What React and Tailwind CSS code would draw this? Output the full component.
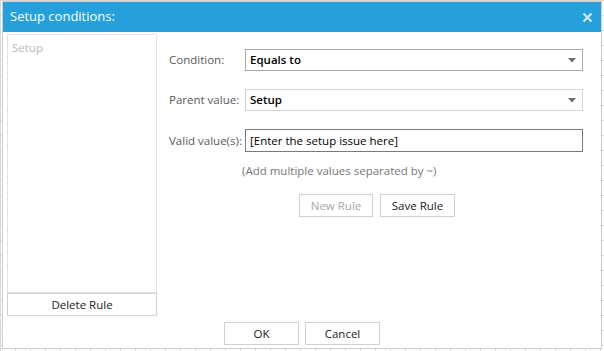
import { useState } from 'react';

function Select({ value, focused }) {
  return (
    <div
      className={`flex h-[22px] flex-1 items-center justify-between border bg-white pl-[4px] pr-[6px] ${
        focused ? 'border-[#a9a9a9]' : 'border-[#d4d4d4]'
      }`}
    >
      <span className="text-[11.5px] font-semibold text-black">{value}</span>
      <svg width="8" height="5" viewBox="0 0 8 5">
        <path d="M0 0 H8 L4 4.5 Z" fill="#6e6e6e" />
      </svg>
    </div>
  );
}

function Btn({ children, disabled, className = '' }) {
  return (
    <button
      type="button"
      disabled={disabled}
      className={`h-[23px] border border-[#d0d0d0] bg-white text-[11.5px] ${
        disabled ? 'text-[#a8a8a8]' : 'text-[#1a1a1a]'
      } ${className}`}
    >
      {children}
    </button>
  );
}

export default function App() {
  const [valid, setValid] = useState('[Enter the setup issue here]');

  return (
    <div
      className="h-[351px] w-[604px] overflow-hidden bg-white bg-[linear-gradient(to_right,#d8d8d8_1px,transparent_1px),linear-gradient(to_bottom,#d8d8d8_1px,transparent_1px)] bg-[size:15px_15px] pt-[1px] pl-[2px]"
      style={{ fontFamily: '"Open Sans", "Noto Sans", sans-serif' }}
    >
      <div className="flex h-[348px] w-[600px] flex-col border border-[#cfcfcf] bg-white">
        {/* Title bar */}
        <div className="flex h-[30px] shrink-0 items-center justify-between bg-[#26a0da] pl-[7px] pr-[8px]">
          <span className="text-[13px] text-white">Setup conditions:</span>
          <svg width="11" height="11" viewBox="0 0 11 11">
            <path d="M1.5 1.5 L9.5 9.5 M9.5 1.5 L1.5 9.5" stroke="#cfeaf8" strokeWidth="2.2" />
          </svg>
        </div>

        {/* Body */}
        <div className="flex flex-1 pt-[2px] pl-[4px] pr-[18px]">
          <div className="flex w-[150px] flex-col">
            <div className="flex-1 border border-[#e4e4e4] px-[4px] pt-[3px] leading-[16px]">
              <span className="text-[11.5px] text-[#b8b8b8]">Setup</span>
            </div>
            <Btn className="w-full">Delete Rule</Btn>
          </div>

          <div className="flex flex-1 flex-col pl-[12px] pt-[15px]">
            <div className="flex items-center">
              <span className="w-[76px] text-[11.5px] text-[#5a5a5a]">Condition:</span>
              <Select value="Equals to" focused />
            </div>
            <div className="mt-[18px] flex items-center">
              <span className="w-[76px] text-[11.5px] text-[#5a5a5a]">Parent value:</span>
              <Select value="Setup" />
            </div>
            <div className="mt-[18px] flex items-center">
              <span className="w-[76px] whitespace-nowrap text-[11.5px] text-[#5a5a5a]">Valid value(s):</span>
              <input
                value={valid}
                onChange={(e) => setValid(e.target.value)}
                className="h-[23px] flex-1 border border-[#7a7a7a] bg-white px-[4px] text-[11.5px] text-black outline-none"
              />
            </div>
            <div className="mt-[10px] pl-[73px] text-[11.5px] text-[#777]">
              (Add multiple values separated by ~)
            </div>
            <div className="mt-[15px] flex gap-[7px] pl-[130px]">
              <Btn disabled className="w-[74px]">New Rule</Btn>
              <Btn className="w-[75px]">Save Rule</Btn>
            </div>
          </div>
        </div>

        {/* Footer */}
        <div className="flex shrink-0 justify-center gap-[6px] pt-[6px] pb-[3px]">
          <Btn className="w-[75px]">OK</Btn>
          <Btn className="w-[75px]">Cancel</Btn>
        </div>
      </div>
    </div>
  );
}
